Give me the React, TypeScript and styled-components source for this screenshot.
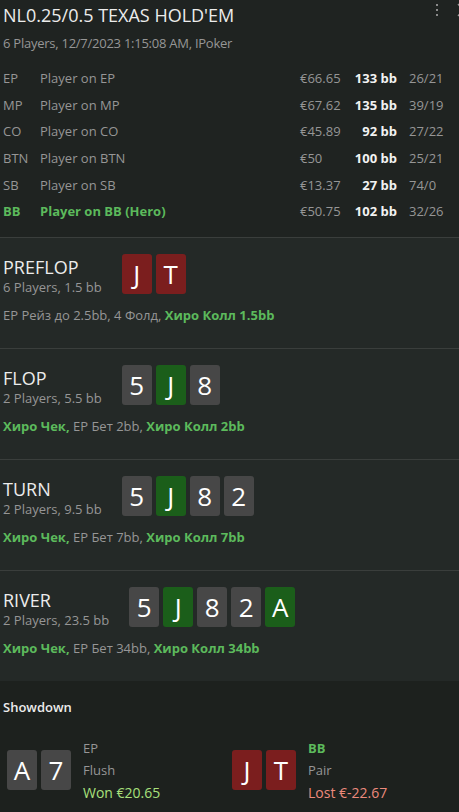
import styled, { createGlobalStyle } from 'styled-components';

type CardColor = 'gray' | 'green' | 'red';

type CardType = {
	rank: string;
	color: CardColor;
};

type PlayerType = {
	pos: string;
	name: string;
	money: string;
	bb: string;
	stats: string;
	hero?: boolean;
};

type ActionPart = {
	text: string;
	hero?: boolean;
};

type StreetType = {
	name: string;
	info: string;
	cards: CardType[];
	actions: ActionPart[];
};

const GREEN = '#5cba5c';
const GRAY = '#969696';

const cardColors: Record<CardColor, string> = {
	gray: '#474747',
	green: '#1b5e1a',
	red: '#7b1e1e',
};

const GlobalStyle = createGlobalStyle`
	html, body {
		margin: 0;
		padding: 0;
		background-color: #1d211e;
	}

	body {
		font-family: 'Open Sans', 'Noto Sans', sans-serif;
		color: #e6e6e6;
		-webkit-font-smoothing: antialiased;
	}
`;

const Page = styled.div`
	width: 459px;
	height: 812px;
	overflow: hidden;
	background-color: #1d211e;
`;

const Header = styled.header`
	position: relative;
	padding: 3px 0 12px 3px;
	background-color: #1f2321;
	border-bottom: 1px solid #3a3e3c;
`;

const Title = styled.h1`
	margin: 0;
	font-size: 18px;
	font-weight: 400;
	line-height: 24px;
	color: #ececec;
`;

const SubTitle = styled.div`
	margin-top: 7px;
	font-size: 13px;
	line-height: 18px;
	letter-spacing: -0.25px;
	color: ${GRAY};
`;

const HeaderIcons = styled.div`
	position: absolute;
	top: 3px;
	left: 432px;
	display: flex;
	align-items: flex-start;
	gap: 15px;
`;

const PlayerTable = styled.div`
	margin-top: 13px;
`;

const PlayerRow = styled.div<{ $hero?: boolean }>`
	display: grid;
	grid-template-columns: 37px 1fr 45px 52px 62px;
	align-items: center;
	height: 26.6px;
	font-size: 13px;
	color: ${(props) => (props.$hero ? GREEN : GRAY)};
	font-weight: ${(props) => (props.$hero ? 700 : 400)};
`;

const Money = styled.span`
	color: ${GRAY};
	font-weight: 400;
`;

const Stack = styled.span`
	text-align: right;
	color: #f2f2f2;
	font-weight: 700;
`;

const Stats = styled.span`
	padding-left: 12px;
	color: ${GRAY};
	font-weight: 400;
`;

const Street = styled.section<{ $last?: boolean }>`
	padding: 16px 0 24px 3px;
	background-color: #242927;
	border-bottom: ${(props) => (props.$last ? 'none' : '1px solid #3a3e3c')};
`;

const StreetTop = styled.div`
	display: flex;
	align-items: flex-start;
	gap: 20px;
	height: 40px;
`;

const StreetLabel = styled.div`
	margin-top: 2px;
`;

const StreetName = styled.div`
	font-size: 18px;
	line-height: 22px;
	color: #ececec;
`;

const StreetInfo = styled.div`
	font-size: 13px;
	line-height: 18px;
	color: ${GRAY};
	white-space: nowrap;
`;

const Cards = styled.div`
	display: flex;
	gap: 4px;
`;

const Card = styled.div<{ $color: CardColor }>`
	display: flex;
	align-items: center;
	justify-content: center;
	width: 30px;
	height: 40px;
	border-radius: 3px;
	background-color: ${(props) => cardColors[props.$color]};
	font-size: 26px;
	line-height: 1;
	color: #ffffff;
`;

const ActionLine = styled.div`
	margin-top: 12px;
	font-size: 13px;
	line-height: 18px;
	color: ${GRAY};
`;

const HeroAction = styled.span`
	color: ${GREEN};
	font-weight: 700;
`;

const Showdown = styled.section`
	padding: 17px 2px 0 7px;
	background-color: #1d211e;
`;

const ShowdownTitle = styled.div`
	margin-left: -4px;
	font-size: 13px;
	font-weight: 600;
	line-height: 18px;
	color: #ececec;
`;

const ShowdownPlayers = styled.div`
	display: grid;
	grid-template-columns: 1fr 1fr;
	margin-top: 21px;
`;

const ShowdownPlayer = styled.div`
	display: flex;
	align-items: center;
	gap: 12px;
`;

const ShowdownInfo = styled.div`
	font-size: 13px;
	line-height: 22.5px;
	color: ${GRAY};
`;

const ShowdownPos = styled.div<{ $hero?: boolean }>`
	color: ${(props) => (props.$hero ? GREEN : GRAY)};
	font-weight: ${(props) => (props.$hero ? 700 : 400)};
`;

const Result = styled.div<{ $won: boolean }>`
	font-size: 14px;
	color: ${(props) => (props.$won ? '#a8e07c' : '#ec8a7c')};
`;

const players: PlayerType[] = [
	{ pos: 'EP', name: 'Player on EP', money: '€66.65', bb: '133 bb', stats: '26/21' },
	{ pos: 'MP', name: 'Player on MP', money: '€67.62', bb: '135 bb', stats: '39/19' },
	{ pos: 'CO', name: 'Player on CO', money: '€45.89', bb: '92 bb', stats: '27/22' },
	{ pos: 'BTN', name: 'Player on BTN', money: '€50', bb: '100 bb', stats: '25/21' },
	{ pos: 'SB', name: 'Player on SB', money: '€13.37', bb: '27 bb', stats: '74/0' },
	{ pos: 'BB', name: 'Player on BB (Hero)', money: '€50.75', bb: '102 bb', stats: '32/26', hero: true },
];

const board: CardType[] = [
	{ rank: '5', color: 'gray' },
	{ rank: 'J', color: 'green' },
	{ rank: '8', color: 'gray' },
	{ rank: '2', color: 'gray' },
	{ rank: 'A', color: 'green' },
];

const heroCards: CardType[] = [
	{ rank: 'J', color: 'red' },
	{ rank: 'T', color: 'red' },
];

const streets: StreetType[] = [
	{
		name: 'PREFLOP',
		info: '6 Players, 1.5 bb',
		cards: heroCards,
		actions: [{ text: 'EP Рейз до 2.5bb, 4 Фолд, ' }, { text: 'Хиро Колл 1.5bb', hero: true }],
	},
	{
		name: 'FLOP',
		info: '2 Players, 5.5 bb',
		cards: board.slice(0, 3),
		actions: [
			{ text: 'Хиро Чек,', hero: true },
			{ text: ' EP Бет 2bb, ' },
			{ text: 'Хиро Колл 2bb', hero: true },
		],
	},
	{
		name: 'TURN',
		info: '2 Players, 9.5 bb',
		cards: board.slice(0, 4),
		actions: [
			{ text: 'Хиро Чек,', hero: true },
			{ text: ' EP Бет 7bb, ' },
			{ text: 'Хиро Колл 7bb', hero: true },
		],
	},
	{
		name: 'RIVER',
		info: '2 Players, 23.5 bb',
		cards: board,
		actions: [
			{ text: 'Хиро Чек,', hero: true },
			{ text: ' EP Бет 34bb, ' },
			{ text: 'Хиро Колл 34bb', hero: true },
		],
	},
];

const showdown = [
	{ pos: 'EP', hand: 'Flush', result: 'Won €20.65', won: true, cards: [{ rank: 'A', color: 'gray' }, { rank: '7', color: 'gray' }] as CardType[] },
	{ pos: 'BB', hand: 'Pair', result: 'Lost €-22.67', won: false, hero: true, cards: heroCards },
];

const KebabIcon = () => (
	<svg width='10' height='16' viewBox='0 0 10 16'>
		<rect x='4' y='1' width='2' height='2' fill='#8a8a8a' />
		<rect x='4' y='6' width='2' height='2' fill='#8a8a8a' />
		<rect x='4' y='11' width='2' height='2' fill='#8a8a8a' />
	</svg>
);

const CloseIcon = () => (
	<svg width='12' height='14' viewBox='0 0 12 14'>
		<path d='M1 1 L11 13 M11 1 L1 13' stroke='#9a9a9a' strokeWidth='1.3' fill='none' />
	</svg>
);

const App = () => {
	return (
		<Page>
			<GlobalStyle />
			<Header>
				<Title>NL0.25/0.5 TEXAS HOLD'EM</Title>
				<SubTitle>6 Players, 12/7/2023 1:15:08 AM, IPoker</SubTitle>
				<HeaderIcons>
					<KebabIcon />
					<CloseIcon />
				</HeaderIcons>
				<PlayerTable>
					{players.map((player) => (
						<PlayerRow key={player.pos} $hero={player.hero}>
							<span>{player.pos}</span>
							<span>{player.name}</span>
							<Money>{player.money}</Money>
							<Stack>{player.bb}</Stack>
							<Stats>{player.stats}</Stats>
						</PlayerRow>
					))}
				</PlayerTable>
			</Header>

			{streets.map((street, index) => (
				<Street key={street.name} $last={index === streets.length - 1}>
					<StreetTop>
						<StreetLabel>
							<StreetName>{street.name}</StreetName>
							<StreetInfo>{street.info}</StreetInfo>
						</StreetLabel>
						<Cards>
							{street.cards.map((card, i) => (
								<Card key={i} $color={card.color}>
									{card.rank}
								</Card>
							))}
						</Cards>
					</StreetTop>
					<ActionLine>
						{street.actions.map((part, i) =>
							part.hero ? <HeroAction key={i}>{part.text}</HeroAction> : <span key={i}>{part.text}</span>
						)}
					</ActionLine>
				</Street>
			))}

			<Showdown>
				<ShowdownTitle>Showdown</ShowdownTitle>
				<ShowdownPlayers>
					{showdown.map((player) => (
						<ShowdownPlayer key={player.pos}>
							<Cards>
								{player.cards.map((card, i) => (
									<Card key={i} $color={card.color}>
										{card.rank}
									</Card>
								))}
							</Cards>
							<ShowdownInfo>
								<ShowdownPos $hero={player.hero}>{player.pos}</ShowdownPos>
								<div>{player.hand}</div>
								<Result $won={player.won}>{player.result}</Result>
							</ShowdownInfo>
						</ShowdownPlayer>
					))}
				</ShowdownPlayers>
			</Showdown>
		</Page>
	);
};

export default App;
